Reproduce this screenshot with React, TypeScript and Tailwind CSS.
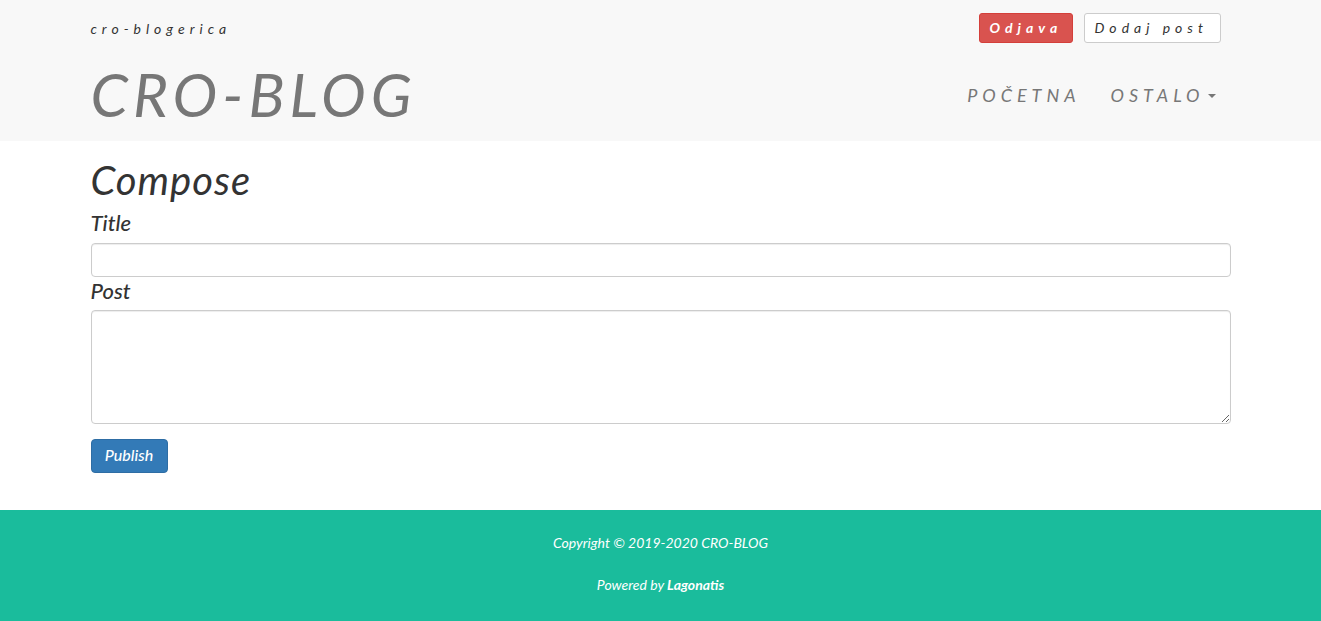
const fieldClass =
  "block w-full rounded border border-[#cccccc] bg-white px-3 py-1.5 text-sm text-[#555555] shadow-[inset_0_1px_1px_rgba(0,0,0,0.075)] outline-none focus:border-[#66afe9]";

function Header() {
  return (
    <header className="bg-[#f8f8f8]">
      <div className="mx-auto flex w-full max-w-[1170px] flex-col px-[15px] pt-[13px] tracking-[5px]">
        <div className="flex items-start justify-between pr-[10px]">
          <p className="pt-[6px] text-sm leading-5">cro-blogerica</p>
          <div className="flex gap-[11px]">
            <button
              type="button"
              className="h-[30px] w-[94px] rounded-[3px] border border-[#d43f3a] bg-[#d9534f] pl-[10px] text-left text-sm leading-5 font-bold whitespace-nowrap text-white"
            >
              Odjava
            </button>
            <button
              type="button"
              className="h-[30px] w-[137px] rounded-[3px] border border-[#cccccc] bg-white pl-[10px] text-left text-sm leading-5 whitespace-nowrap"
            >
              Dodaj post
            </button>
          </div>
        </div>
        <div className="flex h-[98px] items-start justify-between pr-[15px]">
          <a href="#" className="pt-[9px] text-[60px] leading-[84px] text-[#777777]">
            CRO-BLOG
          </a>
          <nav className="flex gap-[30px] pt-[40px] text-lg leading-6 text-[#777777]">
            <a href="#">POČETNA</a>
            <a href="#" className="flex items-center gap-[3px]">
              OSTALO
              <svg width="8" height="4" viewBox="0 0 8 4" fill="currentColor" className="mt-[2px]" aria-hidden="true">
                <path d="M0 0h8L4 4z" />
              </svg>
            </a>
          </nav>
        </div>
      </div>
    </header>
  );
}

function ComposeForm() {
  return (
    <main className="mx-auto w-full max-w-[1170px] px-[15px] pt-[17px] pb-[37px]">
      <h1 className="text-[40px] leading-[44px] tracking-[1px]">Compose</h1>
      <form onSubmit={(event) => event.preventDefault()}>
        <label htmlFor="title" className="mt-[6px] mb-[6px] block text-[22px] leading-[29px] font-medium">
          Title
        </label>
        <input id="title" name="title" type="text" className={`${fieldClass} h-[34px]`} />
        <label htmlFor="post" className="mb-[6px] block text-[22px] leading-[27px] font-medium">
          Post
        </label>
        <textarea id="post" name="post" rows={5} className={`${fieldClass} h-[114px]`} />
        <button
          type="submit"
          className="mt-[15px] block h-[34px] w-[77px] rounded border border-[#2e6da4] bg-[#337ab7] pb-[2px] text-base leading-5 font-medium text-white"
        >
          Publish
        </button>
      </form>
    </main>
  );
}

function Footer() {
  return (
    <footer className="flex grow flex-col items-center gap-[22px] bg-[#1abc9c] pt-[23px] pb-[26px] text-sm leading-5 text-white">
      <p>Copyright © 2019-2020 CRO-BLOG</p>
      <p>
        Powered by <a href="#" className="font-bold">Lagonatis</a>
      </p>
    </footer>
  );
}

export default function App() {
  return (
    <div className="flex min-h-screen flex-col bg-white font-['Lato',sans-serif] text-[#333333] italic">
      <Header />
      <ComposeForm />
      <Footer />
    </div>
  );
}
